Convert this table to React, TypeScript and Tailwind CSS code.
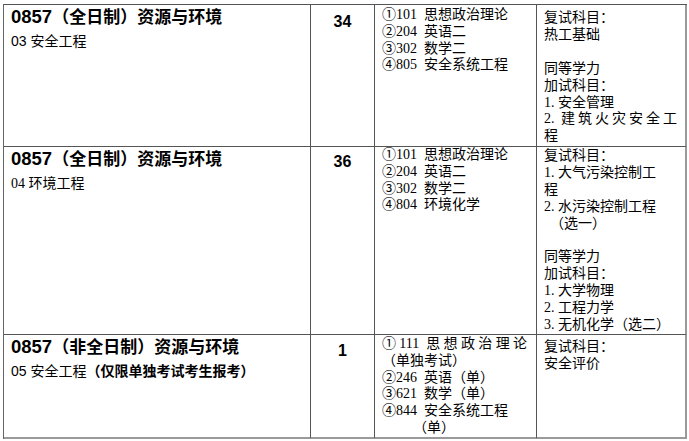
import React from "react";

type Line = { text: React.ReactNode; cls?: string };

interface RowProps {
  title: React.ReactNode;
  sub: React.ReactNode;
  quota: string;
  exams: Line[];
  retest: Line[];
  last?: boolean;
  pads: { quota: string; exams: string; retest: string };
}

// ═══════════════════════════════════════════════════════
// One programme row of the table
// ═══════════════════════════════════════════════════════
function ProgrammeRow({ title, sub, quota, exams, retest, last, pads }: RowProps) {
  const cell = last
    ? "border-r border-b-2 border-r-[#555] border-b-[#9a9a9a]"
    : "border-r border-b border-[#555]";
  return (
    <>
      {/* Programme name */}
      <div className={`${cell} pl-[7px] pt-[2px] text-black`}>
        <div className="text-[17px] font-bold leading-[20px] whitespace-nowrap [font-family:'Liberation_Sans','Noto_Sans_CJK_SC',sans-serif]">
          {title}
        </div>
        <div className="mt-[3px] text-[14px] leading-[20px] whitespace-nowrap [font-family:'Liberation_Sans','Noto_Sans_CJK_SC',sans-serif]">
          {sub}
        </div>
      </div>

      {/* Quota */}
      <div className={`${cell} ${pads.quota} text-center`}>
        <span className="text-[16px] font-bold leading-[20px] text-black [font-family:'Liberation_Sans',sans-serif]">
          {quota}
        </span>
      </div>

      {/* Written exam subjects */}
      <div
        className={`${cell} ${pads.exams} pl-[7px] text-[14px] leading-[16.8px] text-black [font-family:'Liberation_Serif','Noto_Sans_CJK_SC',serif]`}
      >
        {exams.map((l, i) => (
          <div key={i} className={`whitespace-nowrap ${l.cls ?? ""}`}>
            {l.text}
          </div>
        ))}
      </div>

      {/* Re-examination subjects */}
      <div
        className={`${
          last
            ? "border-r-2 border-b-2 border-[#9a9a9a]"
            : "border-r-2 border-b border-r-[#9a9a9a] border-b-[#555]"
        } ${pads.retest} pl-[7px] text-[14px] leading-[16.9px] text-black [font-family:'Liberation_Serif','Noto_Sans_CJK_SC',serif]`}
      >
        {retest.map((l, i) => (
          <div key={i} className={`whitespace-nowrap ${l.cls ?? ""}`}>
            {l.text === "" ? "\u00a0" : l.text}
          </div>
        ))}
      </div>
    </>
  );
}

const Title = ({ kind }: { kind: string }) => (
  <>
    <span className="text-[18.5px]">0857</span>（{kind}）资源与环境
  </>
);

export default function App() {
  return (
    <div className="bg-white w-[689px] h-[441px] overflow-hidden">
      <div className="ml-[3px] mt-[4px] grid w-[684px] grid-cols-[307px_64px_162px_150px] grid-rows-[142px_188px_104px] border-l border-t border-l-[#666] border-t-[#555]">
        <ProgrammeRow
          title={<Title kind="全日制" />}
          sub="03 安全工程"
          quota="34"
          pads={{ quota: "pt-[4px]", exams: "pt-[2px]", retest: "pt-[5px]" }}
          exams={[
            { text: "①101\u2002思想政治理论" },
            { text: "②204\u2002英语二" },
            { text: "③302\u2002数学二" },
            { text: "④805\u2002安全系统工程" },
          ]}
          retest={[
            { text: "复试科目：" },
            { text: "热工基础" },
            { text: "" },
            { text: "同等学力" },
            { text: "加试科目：" },
            { text: "1. 安全管理" },
            { text: "2. 建筑火灾安全工", cls: "w-[133px] text-justify [text-align-last:justify]" },
            { text: "程" },
          ]}
        />
        <ProgrammeRow
          title={<Title kind="全日制" />}
          sub={<span className="[font-family:'Liberation_Serif','Noto_Sans_CJK_SC',serif]">04 环境工程</span>}
          quota="36"
          pads={{ quota: "pt-[2px]", exams: "pt-0", retest: "pt-[1px]" }}
          exams={[
            { text: "①101\u2002思想政治理论" },
            { text: "②204\u2002英语二" },
            { text: "③302\u2002数学二" },
            { text: "④804\u2002环境化学" },
          ]}
          retest={[
            { text: "复试科目：" },
            { text: "1. 大气污染控制工" },
            { text: "程" },
            { text: "2. 水污染控制工程" },
            { text: "（选一）", cls: "pl-[6px]" },
            { text: "" },
            { text: "同等学力" },
            { text: "加试科目：" },
            { text: "1. 大学物理" },
            { text: "2. 工程力学" },
            { text: "3. 无机化学（选二）" },
          ]}
        />
        <ProgrammeRow
          last
          title={<Title kind="非全日制" />}
          sub={
            <>
              05 安全工程<span className="font-bold">（仅限单独考试考生报考）</span>
            </>
          }
          quota="1"
          pads={{ quota: "pt-[3px]", exams: "pt-[1px]", retest: "pt-[4px]" }}
          exams={[
            { text: "①111 思想政治理论", cls: "w-[145px] text-justify [text-align-last:justify]" },
            { text: "（单独考试）" },
            { text: "②246\u2002英语（单）" },
            { text: "③621\u2002数学（单）" },
            { text: "④844\u2002安全系统工程" },
            { text: "（单）", cls: "pl-[31px]" },
          ]}
          retest={[{ text: "复试科目：" }, { text: "安全评价" }]}
        />
      </div>
    </div>
  );
}
